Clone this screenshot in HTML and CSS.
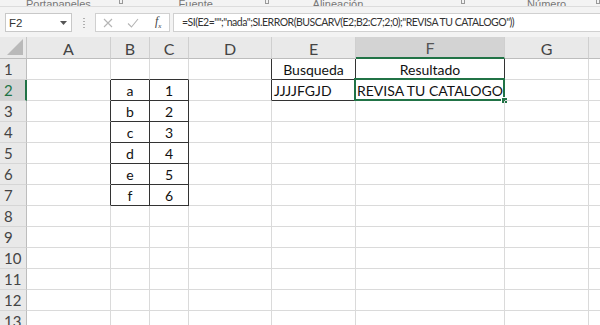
FILE: index.html
```html
<!DOCTYPE html>
<html lang="es">
<head>
<meta charset="utf-8">
<title>Excel</title>
<link rel="stylesheet" href="styles.css">
</head>
<body>
<div class="app">
  <div class="ribbon">
    <span class="grp g1">Portapapeles</span><span class="launch l1"></span>
    <span class="grp g2">Fuente</span><span class="launch l2"></span>
    <span class="grp g3">Alineación</span><span class="launch l3"></span>
    <span class="grp g4">Número</span><span class="launch l4"></span>
  </div>
  <div class="fbar">
    <div class="namebox"><span>F2</span>
      <svg class="dd" width="7" height="4" viewBox="0 0 7 4"><path d="M0 0h7L3.5 4z" fill="#555"/></svg>
    </div>
    <div class="grip"><i></i><i></i><i></i><i></i></div>
    <div class="fnbox">
      <svg width="10" height="10" viewBox="0 0 10 10"><path d="M1 1l8 8M9 1l-8 8" stroke="#b5b5b5" stroke-width="1.1" fill="none"/></svg>
      <svg width="12" height="10" viewBox="0 0 12 10"><path d="M1 5.5l3.5 3.5L11 1" stroke="#b5b5b5" stroke-width="1.1" fill="none"/></svg>
      <span class="fx">f<sub>x</sub></span>
    </div>
    <div class="formula">=SI(E2="";"nada";SI.ERROR(BUSCARV(E2;B2:C7;2;0);"REVISA TU CATALOGO"))</div>
  </div>
  <div class="sheet">
    <div class="hd corner"><svg width="16" height="16" viewBox="0 0 16 16"><path d="M16 0V16H0z" fill="#b9b9b9"/></svg></div>
    <div class="hd col">A</div><div class="hd col">B</div><div class="hd col">C</div><div class="hd col">D</div>
    <div class="hd col">E</div><div class="hd col sel">F</div><div class="hd col">G</div><div class="hd col last"></div>

    <div class="hd row">1</div>
    <div class="c lb"></div><div class="c bb"></div><div class="c bb"></div><div class="c rb"></div>
    <div class="c t ctr">Busqueda</div><div class="c t ctr">Resultado</div><div class="c"></div><div class="c"></div>

    <div class="hd row rsel">2</div>
    <div class="c rb"></div><div class="c t ctr">a</div><div class="c t ctr">1</div><div class="c rb"></div>
    <div class="c t">JJJJFGJD</div><div class="c t ctr active">REVISA TU CATALOGO<span class="selbox"></span><span class="handle"></span></div><div class="c"></div><div class="c"></div>

    <div class="hd row">3</div>
    <div class="c rb"></div><div class="c t ctr">b</div><div class="c t ctr">2</div><div class="c"></div>
    <div class="c"></div><div class="c"></div><div class="c"></div><div class="c"></div>

    <div class="hd row">4</div>
    <div class="c rb"></div><div class="c t ctr">c</div><div class="c t ctr">3</div><div class="c"></div>
    <div class="c"></div><div class="c"></div><div class="c"></div><div class="c"></div>

    <div class="hd row">5</div>
    <div class="c rb"></div><div class="c t ctr">d</div><div class="c t ctr">4</div><div class="c"></div>
    <div class="c"></div><div class="c"></div><div class="c"></div><div class="c"></div>

    <div class="hd row">6</div>
    <div class="c rb"></div><div class="c t ctr">e</div><div class="c t ctr">5</div><div class="c"></div>
    <div class="c"></div><div class="c"></div><div class="c"></div><div class="c"></div>

    <div class="hd row">7</div>
    <div class="c rb"></div><div class="c t ctr">f</div><div class="c t ctr">6</div><div class="c"></div>
    <div class="c"></div><div class="c"></div><div class="c"></div><div class="c"></div>

    <div class="hd row">8</div>
    <div class="c"></div><div class="c"></div><div class="c"></div><div class="c"></div>
    <div class="c"></div><div class="c"></div><div class="c"></div><div class="c"></div>

    <div class="hd row">9</div>
    <div class="c"></div><div class="c"></div><div class="c"></div><div class="c"></div>
    <div class="c"></div><div class="c"></div><div class="c"></div><div class="c"></div>

    <div class="hd row">10</div>
    <div class="c"></div><div class="c"></div><div class="c"></div><div class="c"></div>
    <div class="c"></div><div class="c"></div><div class="c"></div><div class="c"></div>

    <div class="hd row">11</div>
    <div class="c"></div><div class="c"></div><div class="c"></div><div class="c"></div>
    <div class="c"></div><div class="c"></div><div class="c"></div><div class="c"></div>

    <div class="hd row">12</div>
    <div class="c"></div><div class="c"></div><div class="c"></div><div class="c"></div>
    <div class="c"></div><div class="c"></div><div class="c"></div><div class="c"></div>

    <div class="hd row">13</div>
    <div class="c"></div><div class="c"></div><div class="c"></div><div class="c"></div>
    <div class="c"></div><div class="c"></div><div class="c"></div><div class="c"></div>
  </div>
</div>
</body>
</html>
```
FILE: styles.css
```css
html, body {
  margin: 0;
  padding: 0;
  background: #ffffff;
}
.app {
  width: 600px;
  height: 325px;
  overflow: hidden;
  background: #f3f3f3;
  font-family: Lato, "Open Sans", sans-serif;
}
.ribbon {
  height: 6px;
  overflow: hidden;
  position: relative;
  border-bottom: 1px solid #dcdcdc;
  display: flex;
  align-items: flex-end;
}
.grp {
  font-family: "Liberation Sans", sans-serif;
  font-size: 11px;
  line-height: 11px;
  color: #777;
  margin-bottom: -4px;
  white-space: nowrap;
}
.launch {
  width: 6px;
  height: 6px;
  border: 1px solid #999;
  border-top: none;
  box-sizing: border-box;
  margin-bottom: 2px;
}
.g1 { margin-left: 26px; }
.l1 { margin-left: 28px; }
.g2 { margin-left: 56px; }
.l2 { margin-left: 52px; }
.g3 { margin-left: 44px; }
.l3 { margin-left: 98px; }
.g4 { margin-left: 62px; }
.l4 { margin-left: 30px; }

.fbar {
  height: 30px;
  box-sizing: border-box;
  padding-top: 6px;
  display: flex;
  align-items: flex-start;
}
.namebox {
  margin-left: 5px;
  width: 67px;
  height: 19px;
  box-sizing: border-box;
  border: 1px solid #c8c8c8;
  background: #fff;
  display: flex;
  align-items: center;
  justify-content: space-between;
  padding: 0 4px 0 3px;
  font-family: "Liberation Sans", sans-serif;
  font-size: 11.5px;
  color: #333;
}
.grip {
  width: 23px;
  height: 19px;
  display: flex;
  flex-direction: column;
  align-items: center;
  justify-content: center;
  gap: 2px;
}
.grip i {
  display: block;
  width: 2px;
  height: 1px;
  background: #b0b0b0;
}
.fnbox {
  width: 75px;
  height: 19px;
  box-sizing: border-box;
  border: 1px solid #d0d0d0;
  background: #fff;
  display: flex;
  align-items: center;
  padding-left: 7px;
  gap: 14px;
}
.fx {
  font-family: "Liberation Serif", serif;
  font-style: italic;
  font-size: 12px;
  color: #444;
  margin-left: 2px;
}
.fx sub {
  font-size: 7px;
}
.formula {
  margin-left: 3px;
  flex: 1;
  height: 19px;
  box-sizing: border-box;
  border: 1px solid #d0d0d0;
  border-right: none;
  background: #fff;
  padding-left: 8px;
  font-family: Lato, sans-serif;
  font-size: 10.5px;
  letter-spacing: -0.5px;
  line-height: 17px;
  color: #333;
  white-space: nowrap;
  overflow: hidden;
}

.sheet {
  display: grid;
  grid-template-columns: 27px 84px 39px 39px 83px 84px 149px 84px 20px;
  grid-template-rows: 22px repeat(13, 21px);
  background: #fff;
}
.hd {
  background: #e9e9e9;
  box-sizing: border-box;
  color: #444;
  display: flex;
  align-items: center;
  justify-content: center;
  font-size: 16px;
}
.corner {
  border-right: 1px solid #c6c6c6;
  border-bottom: 1px solid #bdbdbd;
  align-items: flex-end;
  justify-content: flex-end;
  padding: 0 3px 3px 0;
}
.col {
  border-right: 1px solid #cfcfcf;
  border-bottom: 1px solid #bdbdbd;
  padding-top: 1px;
}
.col.sel {
  background: #d3d3d3;
  border-bottom: 2px solid #217346;
  color: #555;
}
.row {
  border-right: 1px solid #bdbdbd;
  border-bottom: 1px solid #d6d6d6;
  justify-content: flex-start;
  padding-left: 4px;
  font-size: 15px;
}
.row.rsel {
  background: #d3d3d3;
  border-right: 2px solid #217346;
  color: #217346;
}
.c {
  box-sizing: border-box;
  border-right: 1px solid #dadada;
  border-bottom: 1px solid #dadada;
  font-size: 14px;
  color: #111;
  display: flex;
  align-items: center;
  padding-left: 2px;
  white-space: nowrap;
  position: relative;
}
.c.ctr {
  justify-content: center;
  padding-left: 0;
}
.c.t {
  border-right-color: #333;
  border-bottom-color: #333;
}
.c.rb {
  border-right-color: #333;
}
.c.bb {
  border-bottom-color: #333;
}
.c.lb {
  border-right-color: #dadada;
}
.selbox {
  position: absolute;
  left: -2px;
  top: -2px;
  right: -1px;
  bottom: -1px;
  border: 2px solid #217346;
}
.handle {
  position: absolute;
  right: -4px;
  bottom: -4px;
  width: 5px;
  height: 5px;
  background: #217346;
  border: 1px solid #fff;
}
```
